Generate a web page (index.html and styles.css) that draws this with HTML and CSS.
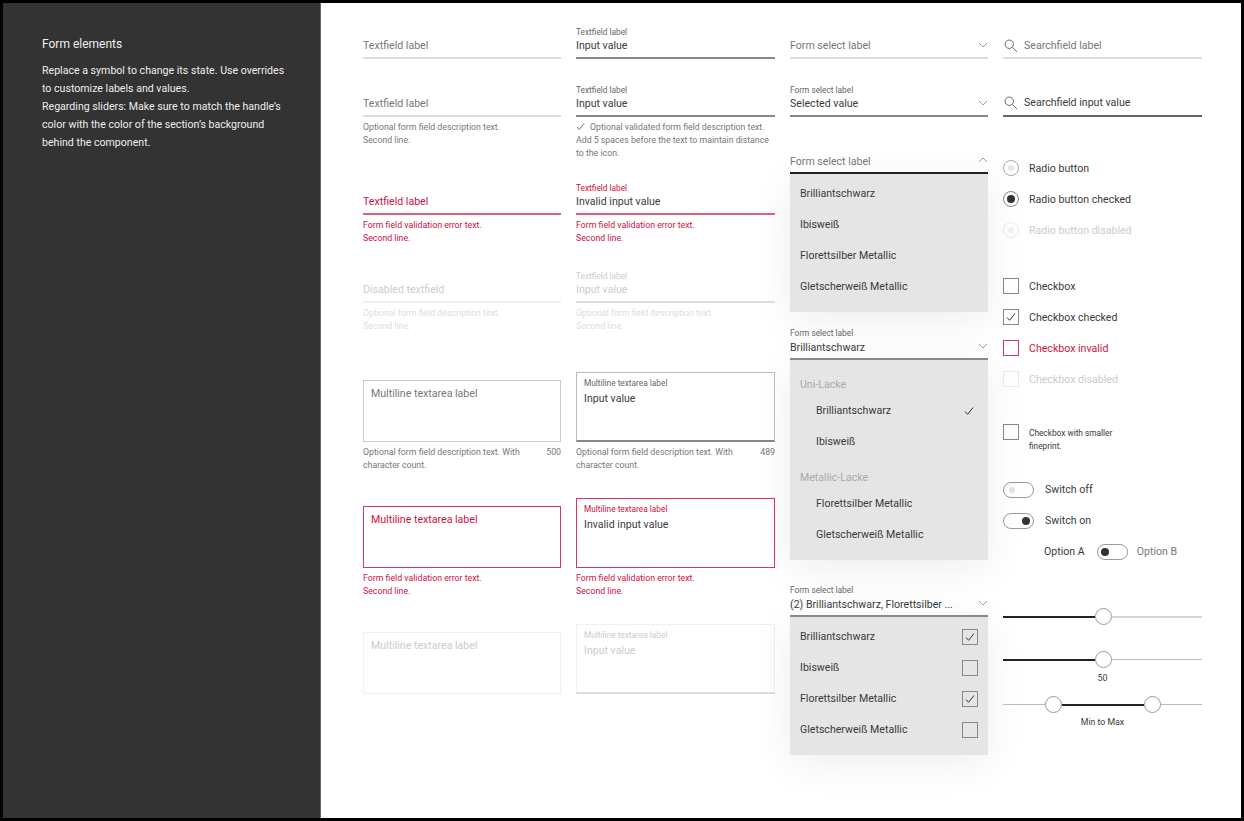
FILE: index.html
```html
<!DOCTYPE html>
<html lang="en">
<head>
<meta charset="utf-8">
<title>Form elements</title>
<link rel="stylesheet" href="styles.css">
</head>
<body>
<svg class="defs" width="0" height="0" aria-hidden="true">
  <symbol id="chev-down" viewBox="0 0 10 6"><path d="M1 1l4 4 4-4" fill="none" stroke="currentColor" stroke-width=".8"/></symbol>
  <symbol id="chev-up" viewBox="0 0 10 6"><path d="M1 5l4-4 4 4" fill="none" stroke="currentColor" stroke-width=".8"/></symbol>
  <symbol id="check" viewBox="0 0 10 10"><path d="M1 5.5l2.6 2.8L9 1.5" fill="none" stroke="currentColor" stroke-width="1"/></symbol>
  <symbol id="search" viewBox="0 0 16 16"><circle cx="6" cy="6" r="4.8" fill="none" stroke="currentColor" stroke-width="1"/><path d="M9.6 9.6l5.2 5.2" fill="none" stroke="currentColor" stroke-width="1"/></symbol>
</svg>
<div class="app">
  <aside class="side">
    <h1 class="side-title">Form elements</h1>
    <p class="side-text">Replace a symbol to change its state. Use overrides to customize labels and values.<br>Regarding sliders: Make sure to match the handle’s color with the color of the section’s background behind the component.</p>
  </aside>
  <main class="main">
    <section class="col col-1">
      <div class="field"><div class="lab"></div><div class="val muted">Textfield label</div></div>
      <div class="block b-84">
        <div class="field"><div class="lab"></div><div class="val muted">Textfield label</div></div>
        <p class="desc">Optional form field description text.<br>Second line.</p>
      </div>
      <div class="block b-182">
        <div class="field invalid"><div class="lab"></div><div class="val red">Textfield label</div></div>
        <p class="desc red">Form field validation error text.<br>Second line.</p>
      </div>
      <div class="block b-270 off">
        <div class="field"><div class="lab"></div><div class="val">Disabled textfield</div></div>
        <p class="desc">Optional form field description text.<br>Second line.</p>
      </div>
      <div class="block b-380">
        <div class="area"><div class="val muted">Multiline textarea label</div></div>
        <div class="desc-row"><p class="desc">Optional form field description text. With character count.</p><span class="count">500</span></div>
      </div>
      <div class="block b-506">
        <div class="area area-red"><div class="val red">Multiline textarea label</div></div>
        <p class="desc red">Form field validation error text.<br>Second line.</p>
      </div>
      <div class="block b-632 off">
        <div class="area area-off"><div class="val">Multiline textarea label</div></div>
      </div>
    </section>

    <section class="col col-2">
      <div class="field filled"><div class="lab">Textfield label</div><div class="val">Input value</div></div>
      <div class="block b-84">
        <div class="field filled"><div class="lab">Textfield label</div><div class="val">Input value</div></div>
        <p class="desc"><svg class="ico-valid"><use href="#check"/></svg>Optional validated form field description text.<br>Add 5 spaces before the text to maintain distance<br>to the icon.</p>
      </div>
      <div class="block b-182">
        <div class="field invalid"><div class="lab red">Textfield label</div><div class="val">Invalid input value</div></div>
        <p class="desc red">Form field validation error text.<br>Second line.</p>
      </div>
      <div class="block b-270 off">
        <div class="field filled"><div class="lab">Textfield label</div><div class="val">Input value</div></div>
        <p class="desc">Optional form field description text.<br>Second line.</p>
      </div>
      <div class="block b-372">
        <div class="area area-tall area-filled"><div class="lab">Multiline textarea label</div><div class="val">Input value</div></div>
        <div class="desc-row"><p class="desc">Optional form field description text. With character count.</p><span class="count">489</span></div>
      </div>
      <div class="block b-498">
        <div class="area area-tall area-red"><div class="lab red">Multiline textarea label</div><div class="val">Invalid input value</div></div>
        <p class="desc red">Form field validation error text.<br>Second line.</p>
      </div>
      <div class="block b-624 off">
        <div class="area area-tall area-filled"><div class="lab">Multiline textarea label</div><div class="val">Input value</div></div>
      </div>
    </section>

    <section class="col col-3">
      <div class="field select"><div class="lab"></div><div class="val muted">Form select label</div><svg class="chev"><use href="#chev-down"/></svg></div>
      <div class="field select filled b-84"><div class="lab">Form select label</div><div class="val">Selected value</div><svg class="chev"><use href="#chev-down"/></svg></div>
      <div class="drop b-140">
        <div class="field select open"><div class="lab"></div><div class="val muted">Form select label</div><svg class="chev"><use href="#chev-up"/></svg></div>
        <ul class="panel">
          <li class="opt">Brilliantschwarz</li>
          <li class="opt">Ibisweiß</li>
          <li class="opt">Florettsilber Metallic</li>
          <li class="opt">Gletscherweiß Metallic</li>
        </ul>
      </div>
      <div class="drop b-327">
        <div class="field select filled"><div class="lab">Form select label</div><div class="val">Brilliantschwarz</div><svg class="chev"><use href="#chev-down"/></svg></div>
        <ul class="panel panel-group">
          <li class="grp">Uni-Lacke</li>
          <li class="opt sub">Brilliantschwarz<svg class="tick"><use href="#check"/></svg></li>
          <li class="opt sub">Ibisweiß</li>
          <li class="grp grp-2">Metallic-Lacke</li>
          <li class="opt sub">Florettsilber Metallic</li>
          <li class="opt sub">Gletscherweiß Metallic</li>
        </ul>
      </div>
      <div class="drop b-584">
        <div class="field select filled"><div class="lab">Form select label</div><div class="val">(2) Brilliantschwarz, Florettsilber ...</div><svg class="chev"><use href="#chev-down"/></svg></div>
        <ul class="panel">
          <li class="opt">Brilliantschwarz<span class="box"><svg class="box-tick"><use href="#check"/></svg></span></li>
          <li class="opt">Ibisweiß<span class="box"></span></li>
          <li class="opt">Florettsilber Metallic<span class="box"><svg class="box-tick"><use href="#check"/></svg></span></li>
          <li class="opt">Gletscherweiß Metallic<span class="box"></span></li>
        </ul>
      </div>
    </section>

    <section class="col col-4">
      <div class="field search"><div class="lab"></div><div class="search-row"><svg class="mag"><use href="#search"/></svg><div class="val muted">Searchfield label</div></div></div>
      <div class="field search filled b-84"><div class="lab"></div><div class="search-row"><svg class="mag"><use href="#search"/></svg><div class="val">Searchfield input value</div></div></div>

      <div class="rows b-radio">
        <div class="row"><span class="radio"></span>Radio button</div>
        <div class="row"><span class="radio radio-on"></span>Radio button checked</div>
        <div class="row off"><span class="radio"></span>Radio button disabled</div>
      </div>
      <div class="rows b-check">
        <div class="row"><span class="box"></span>Checkbox</div>
        <div class="row"><span class="box"><svg class="box-tick"><use href="#check"/></svg></span>Checkbox checked</div>
        <div class="row red"><span class="box box-red"></span>Checkbox invalid</div>
        <div class="row off"><span class="box"></span>Checkbox disabled</div>
      </div>
      <div class="fine"><span class="box"></span><p class="fine-text">Checkbox with smaller<br>fineprint.</p></div>
      <div class="rows b-switch">
        <div class="row row-sw"><span class="switch"><i class="knob knob-off"></i></span>Switch off</div>
        <div class="row row-sw"><span class="switch switch-on"><i class="knob"></i></span>Switch on</div>
        <div class="row row-ab"><span>Option A</span><span class="switch"><i class="knob"></i></span><span class="muted opt-b">Option B</span></div>
      </div>
      <div class="slider s1"><span class="fill"></span><span class="handle"></span><span class="rest"></span></div>
      <div class="slider s2"><span class="fill"></span><span class="handle"></span><span class="rest"></span></div>
      <div class="slider-cap">50</div>
      <div class="slider s3"><span class="rest r-a"></span><span class="handle"></span><span class="fill f-b"></span><span class="handle"></span><span class="rest"></span></div>
      <div class="slider-cap cap-b">Min to Max</div>
    </section>
  </main>
</div>
</body>
</html>
```
FILE: styles.css
```css
* { box-sizing: border-box; }
html, body { margin: 0; height: 100%; overflow: hidden; }
body { background: #000; padding: 3px; font-family: Roboto, "Liberation Sans", sans-serif; color: #3a3a3a; font-size: 10.6px; }
.defs { position: absolute; }
.app { display: flex; height: 815px; }
.side { width: 318px; flex: none; background: #333; border-right: 1px solid #666; padding: 33px 30px 0 39px; color: #eee; }
.side-title { margin: 0; font-size: 12px; line-height: 16px; font-weight: 400; }
.side-text { margin: 10px 0 0; font-size: 10.6px; line-height: 18px; }
.main { flex: 1; background: #fff; display: flex; padding: 23px 0 0 42px; gap: 15px; }
.col { width: 198px; flex: none; display: flex; flex-direction: column; }
.col-2, .col-4 { width: 199px; }

.block { display: flex; flex-direction: column; flex: none; }

.field { height: 33px; border-bottom: 2px solid #ddd; position: relative; flex: none; }
.lab { height: 12px; font-size: 8.3px; line-height: 12px; color: #666; }
.val { font-size: 10.6px; line-height: 16px; white-space: nowrap; }
.field.filled { border-bottom-color: #888; }
.field.invalid { border-bottom-color: #e0627f; }
.off .field { border-bottom-color: #f0f0f0; }
.off .field.filled { border-bottom-color: #ddd; }
.desc { margin: 4px 0 0; font-size: 8.75px; line-height: 13px; color: #777; }

.muted { color: #777; }
.red, .lab.red, .desc.red { color: #cf0f3f; }
.off, .off .val, .off .lab { color: #ccc; }
.off .desc { color: #ddd; }

.col-1 > .b-84 { margin-top: 25px; height: 73px; }
.col-1 > .b-182 { margin-top: 25px; height: 63px; }
.col-1 > .b-270 { margin-top: 25px; height: 85px; }
.col-1 > .b-380 { margin-top: 25px; height: 101px; }
.col-1 > .b-506 { margin-top: 25px; height: 101px; }
.col-1 > .b-632 { margin-top: 25px; }
.col-2 > .b-84 { margin-top: 25px; height: 73px; }
.col-2 > .b-182 { margin-top: 25px; height: 63px; }
.col-2 > .b-270 { margin-top: 25px; height: 77px; }
.col-2 > .b-372 { margin-top: 25px; height: 101px; }
.col-2 > .b-498 { margin-top: 25px; height: 101px; }
.col-2 > .b-624 { margin-top: 25px; }

.ico-valid { width: 9px; height: 9px; margin-right: 5px; color: #666; vertical-align: -1px; }

.area { height: 62px; border: 1px solid #ccc; padding: 3px 7px; flex: none; }
.area .val { line-height: 19px; }
.area-tall { height: 70px; padding-top: 5px; }
.area-tall .lab { height: 11px; line-height: 11px; }
.area-filled { border-color: #bbb; border-bottom: 2px solid #888; }
.off .area-filled { border-color: #f0f0f0; border-bottom-color: #ddd; }
.area-red { border-color: #d8355f; }
.area-off { border-color: #f0f0f0; }
.desc-row { display: flex; justify-content: space-between; gap: 18px; }
.desc-row .desc { flex: 1; }
.count { margin-top: 4px; font-size: 8.75px; line-height: 13px; color: #777; }

.select .chev { position: absolute; right: 0; bottom: 9px; width: 10px; height: 6px; color: #888; }
.select.open { border-bottom-color: #222; }
.col-3 > .b-84 { margin-top: 25px; }
.drop { display: flex; flex-direction: column; flex: none; }
.drop .val { margin-top: 1px; }
.b-140 { margin-top: 24px; }
.b-327 { margin-top: 15px; }
.b-584 { margin-top: 24px; }
.panel { list-style: none; margin: 0; padding: 4px 10px 10px; background: #e5e5e5; box-shadow: 0 8px 40px rgba(0,0,0,.07); }
.panel-group { padding-bottom: 11px; }
.opt { height: 31px; font-size: 10.6px; display: flex; align-items: center; justify-content: space-between; }
.opt.sub { padding: 2px 0 0 16px; }
.grp { height: 20px; margin-top: 10px; font-size: 10.6px; color: #aaa; display: flex; align-items: center; }
.grp-2 { margin-top: 11px; }
.tick { width: 10px; height: 10px; margin-right: 4px; color: #333; }
.box { width: 16px; height: 16px; border: 1px solid #888; display: inline-flex; align-items: center; justify-content: center; flex: none; }
.box-tick { width: 10px; height: 10px; color: #333; }
.box-red { border-color: #d8355f; }
.off .box { border-color: #e8e8e8; }

.col-4 > .b-84 { margin-top: 25px; }
.search.filled { border-bottom-color: #666; }
.search-row { display: flex; align-items: center; gap: 6px; margin: 0 0 0 1px; }
.search.filled .search-row { margin-top: -1px; }
.mag { width: 14px; height: 14px; color: #555; flex: none; }

.rows { display: flex; flex-direction: column; flex: none; }
.row { height: 31px; display: flex; align-items: center; gap: 10px; font-size: 10.6px; }
.b-radio .row, .b-check .row { padding-top: 2px; }
.b-radio .radio, .b-check .box { margin-top: -2px; }
.b-radio { margin-top: 35px; }
.b-check { margin-top: 25px; }
.radio { width: 16px; height: 16px; border-radius: 50%; border: 1px solid #aaa; flex: none; display: flex; align-items: center; justify-content: center; }
.radio::after { content: ""; width: 6px; height: 6px; border-radius: 50%; background: #e5e5e5; }
.off .radio { border-color: #e8e8e8; }
.off .radio::after { background: #f0f0f0; }
.radio-on { border-color: #888; }
.radio-on::after { width: 8px; height: 8px; background: #333; }

.fine { display: flex; gap: 10px; margin-top: 30px; flex: none; }
.fine-text { margin: 3px 0 0; font-size: 8.3px; line-height: 13px; }
.b-switch { margin-top: 21px; }
.row-sw { gap: 11px; }
.switch { width: 31px; height: 16px; border: 1px solid #999; border-radius: 8px; position: relative; display: inline-block; flex: none; }
.knob { position: absolute; left: 3px; top: 3px; width: 8px; height: 8px; border-radius: 50%; background: #333; }
.knob-off { background: #e2e2e2; left: 5px; top: 4px; width: 6px; height: 6px; }
.switch-on .knob { left: auto; right: 3px; }
.row-ab { padding-left: 41px; gap: 12px; }
.opt-b { margin-left: -3px; }

.slider { display: flex; align-items: center; height: 17px; flex: none; }
.s1 { margin-top: 41px; }
.s2 { margin-top: 26px; }
.s3 { margin-top: 12px; }
.fill { height: 2px; background: #222; width: 92px; flex: none; }
.rest { height: 1px; background: #bbb; flex: 1; }
.s1 .rest { height: 2px; background: #d5d5d5; }
.s3 .f-b { width: 82px; }
.s3 .r-a { width: 42px; flex: none; }
.handle { width: 17px; height: 17px; border-radius: 50%; border: 1px solid #999; background: #fff; flex: none; }
.slider-cap { text-align: center; font-size: 8.75px; line-height: 12px; margin-top: 4px; }
.cap-b { margin-top: 3px; }
```
